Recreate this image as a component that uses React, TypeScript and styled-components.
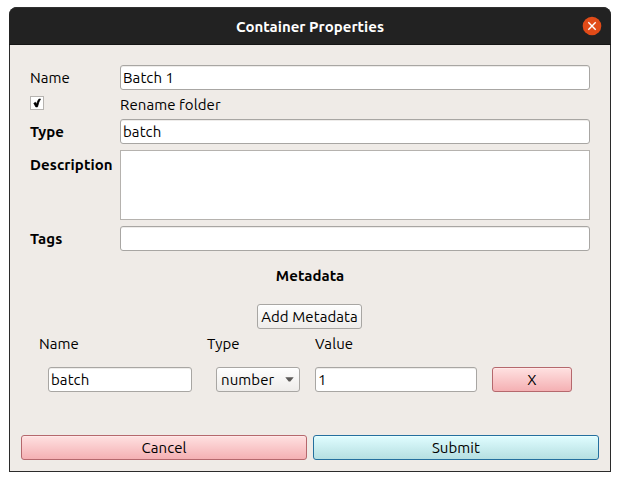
import React from "react";
import styled, { createGlobalStyle, css } from "styled-components";

const GlobalStyle = createGlobalStyle`
  *, *::before, *::after { box-sizing: border-box; }
  body { margin: 0; background: #fff; }
`;

const Desktop = styled.main`
  width: 620px;
  height: 481px;
  padding: 7px 9px 9px;
  font: 15px/20px "Ubuntu", "Noto Sans", sans-serif;
  color: #000;
  overflow: hidden;
`;

const Dialog = styled.section`
  width: 602px;
  height: 465px;
  border-radius: 8px 8px 0 0;
  background: #2b2b2b;
  padding: 0 1px 1px;
  display: flex;
  flex-direction: column;
`;

const TitleBar = styled.header`
  height: 38px;
  flex: none;
  display: grid;
  grid-template-columns: 40px 1fr 40px;
  align-items: center;
  margin: 0 -1px;
  padding-top: 1px;
  border-radius: 8px 8px 0 0;
  border-top: 1px solid #303030;
  border-bottom: 1px solid #151515;
  background: #222;
  color: #fff;
  text-align: center;
`;

const CloseButton = styled.button`
  width: 20px;
  height: 20px;
  margin: -1px 0 0 11px;
  padding: 0;
  border: 0;
  background: none;

  svg { display: block; }
`;

const Body = styled.div`
  flex: 1;
  background: #efebe7;
  padding: 20px 11px 11px;
  display: flex;
  flex-direction: column;
`;

const Text = styled.span<{ $bold?: boolean; $spacing?: number }>`
  font-weight: ${(p) => (p.$bold ? 700 : 400)};
  letter-spacing: ${(p) => p.$spacing ?? 0.08}px;
  white-space: nowrap;
`;

const Properties = styled.div`
  display: grid;
  grid-template-columns: 90px 470px;
  grid-template-rows: 25px 29px 25px 6px 70px 6px 25px;
  margin-left: 9px;
  align-items: center;
`;

const Label = styled.div<{ $row: number }>`
  grid-row: ${(p) => p.$row};
  grid-column: 1;
`;

const DescriptionLabel = styled(Label)`
  align-self: start;
  padding-top: 5px;
`;

const frame = css`
  height: 25px;
  border: 1px solid #a8a6a3;
  border-radius: 3px;
  display: flex;
  align-items: center;
`;

const Field = styled.div<{ $row?: number }>`
  ${frame}
  background: #fff;
  padding-left: 2px;
  box-shadow: inset 0 1px 0 #eeecea;
  ${(p) => p.$row && `grid-row: ${p.$row};`}
`;

const TextArea = styled.div`
  grid-row: 5;
  height: 70px;
  background: #fff;
  border: 1px solid #b5b2ae;
`;

const Checkbox = styled.div`
  width: 14px;
  height: 14px;
  border: 1px solid #b6b3b0;
  background: #fff;
  margin-bottom: 3px;

  svg { display: block; }
`;

const Heading = styled.h2`
  margin: 15px 0 0;
  height: 20px;
  font-size: inherit;
  line-height: 20px;
  text-align: center;
`;

const tones = {
  neutral: { border: "#a8a6a3", top: "#fefefe", bottom: "#eeecea", light: "#fff" },
  pink: { border: "#b5686d", top: "#ffe1e1", bottom: "#f4b0b3", light: "#ffe8e8" },
  blue: { border: "#246f9e", top: "#e0fdff", bottom: "#b5dfe1", light: "#e9ffff" },
};

const Button = styled.button<{ $tone: keyof typeof tones }>`
  ${frame}
  justify-content: center;
  padding: 0;
  font: inherit;
  color: inherit;
  border-color: ${(p) => tones[p.$tone].border};
  background: linear-gradient(${(p) => tones[p.$tone].top}, ${(p) => tones[p.$tone].bottom});
  box-shadow: inset 0 1px 0 ${(p) => tones[p.$tone].light};
`;

const AddButton = styled(Button)`
  width: 105px;
  margin: 18px 0 0 236px;
`;

const Columns = styled.div`
  display: grid;
  grid-template-columns: 168px 108px 1fr;
  margin: 5px 0 0 18px;
  height: 20px;
`;

const EntryRow = styled.div`
  display: grid;
  grid-template-columns: 168px 99px 177px 80px;
  margin: 13px 0 0 27px;
`;

const NameField = styled(Field)`
  width: 144px;
`;

const ValueField = styled(Field)`
  width: 162px;
`;

const Select = styled(Button)`
  width: 84px;
  justify-content: space-between;
  padding: 0 5px 0 4px;
`;

const Actions = styled.footer`
  margin-top: auto;
  display: grid;
  grid-template-columns: 1fr 1fr;
  gap: 6px;
`;

export default function App() {
  return (
    <>
      <GlobalStyle />
      <Desktop>
        <Dialog>
          <TitleBar>
            <span />
            <Text $bold $spacing={0.02}>Container Properties</Text>
            <CloseButton aria-label="Close">
              <svg width="20" height="20" viewBox="0 0 20 20">
                <circle cx="10" cy="10" r="9.3" fill="#e14b18" />
                <path d="M6.3 6.3l7.4 7.4M13.7 6.3l-7.4 7.4" stroke="#fff" strokeWidth="1.4" />
              </svg>
            </CloseButton>
          </TitleBar>
          <Body>
            <Properties>
              <Label $row={1}><Text>Name</Text></Label>
              <Field $row={1}><Text>Batch 1</Text></Field>
              <Label $row={2}>
                <Checkbox role="checkbox" aria-checked="true">
                  <svg width="12" height="12" viewBox="0 0 12 12">
                    <path d="M2.8 6.3L4.5 5.3L5.5 7.2Q6.6 3.6 7.8 2.2L9.5 2Q7.7 4.6 6.5 9.9H4.8Z" fill="#000" stroke="#000" strokeWidth=".7" />
                  </svg>
                </Checkbox>
              </Label>
              <Text>Rename folder</Text>
              <Label $row={3}><Text $bold>Type</Text></Label>
              <Field $row={3}><Text>batch</Text></Field>
              <DescriptionLabel $row={5}><Text $bold>Description</Text></DescriptionLabel>
              <TextArea />
              <Label $row={7}><Text $bold>Tags</Text></Label>
              <Field $row={7} />
            </Properties>
            <Heading><Text $bold>Metadata</Text></Heading>
            <AddButton $tone="neutral"><Text>Add Metadata</Text></AddButton>
            <Columns>
              <Text>Name</Text>
              <Text>Type</Text>
              <Text>Value</Text>
            </Columns>
            <EntryRow>
              <NameField><Text>batch</Text></NameField>
              <Select $tone="neutral">
                <Text>number</Text>
                <svg width="9" height="5" viewBox="0 0 9 5"><path d="M.3.3H8.7L5.3 4.5H3.7Z" fill="#5b5957" /></svg>
              </Select>
              <ValueField><Text>1</Text></ValueField>
              <Button $tone="pink"><Text>X</Text></Button>
            </EntryRow>
            <Actions>
              <Button $tone="pink"><Text>Cancel</Text></Button>
              <Button $tone="blue"><Text>Submit</Text></Button>
            </Actions>
          </Body>
        </Dialog>
      </Desktop>
    </>
  );
}
